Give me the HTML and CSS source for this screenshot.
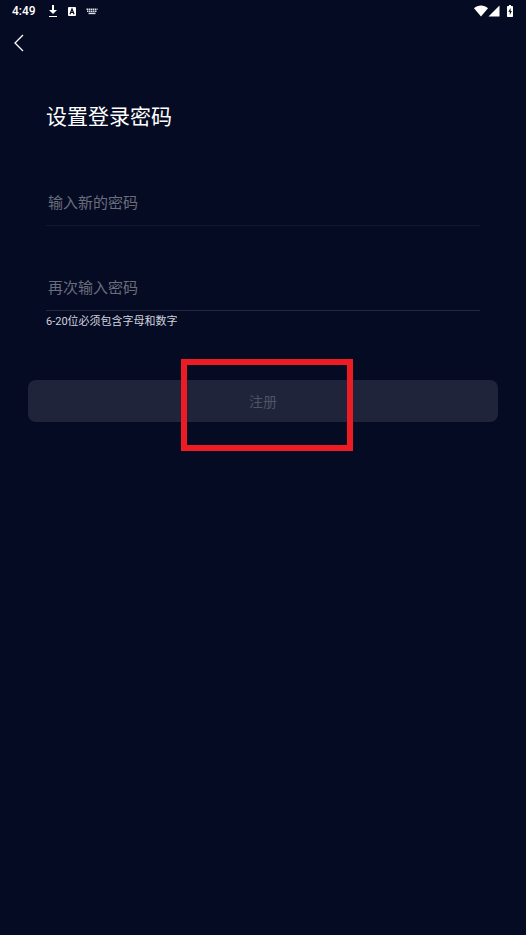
FILE: index.html
```html
<!DOCTYPE html>
<html lang="zh-CN">
<head>
<meta charset="utf-8">
<meta name="viewport" content="width=device-width, initial-scale=1">
<title>设置登录密码</title>
<link rel="stylesheet" href="styles.css">
</head>
<body>
<header class="status">
  <div class="status-left">
    <time class="clock">4:49</time>
    <svg class="download" width="10" height="14" viewBox="0 0 10 14" aria-hidden="true"><path d="M4 1h2v5h3L5 10 1 6h3zM1 12h8v1H1z" fill="#fff"/></svg>
    <svg class="badge" width="8" height="9" viewBox="0 0 8 9" aria-hidden="true"><rect width="8" height="9" rx="1" fill="#fff"/><path d="M2 7.200L4 2l2 5.200M2.800 5.500h2.400" fill="none" stroke="#070b23" stroke-width="1.200"/></svg>
    <svg class="keyboard" width="12" height="7" viewBox="0 0 12 7" aria-hidden="true"><g fill="none" stroke="#e0e2ea" stroke-width="1.500"><path d="M.5 1.300h11" stroke-dasharray="1.500 .5"/><path d="M1 3.300h10" stroke-dasharray="1.500 .5"/><path d="M2.500 5.400h7"/></g></svg>
  </div>
  <div class="status-right">
    <svg width="14" height="12" viewBox="0 0 14 12" aria-hidden="true"><path d="M0 3.200C4-.4 10-.4 14 3.200L7 11.500z" fill="#fff"/></svg>
    <svg width="12" height="12" viewBox="0 0 12 12" aria-hidden="true"><path d="M11.500.5v11H.5z" fill="#fff"/></svg>
    <svg class="battery" width="6" height="12" viewBox="0 0 6 12" aria-hidden="true"><path d="M2 0h2v1h1.200q.8 0 .8.800v9.400q0 .8-.8.800H.8q-.8 0-.8-.8V1.800Q0 1 .8 1H2z" fill="#fff"/><path d="M3.600 3L1.300 6.800h1.500V10l2.100-4H3.600z" fill="#070b23"/></svg>
  </div>
</header>
<nav class="nav">
  <button class="back" type="button" aria-label="返回">
    <svg width="10" height="18" viewBox="0 0 10 18" aria-hidden="true"><path d="M9 1L1 9l8 8" fill="none" stroke="#fff" stroke-width="1.300"/></svg>
  </button>
</nav>
<main>
  <form>
    <div class="fields">
      <h1>设置登录密码</h1>
      <input class="field field-new" type="password" placeholder="输入新的密码" aria-label="输入新的密码">
      <input class="field field-repeat" type="password" placeholder="再次输入密码" aria-label="再次输入密码" aria-describedby="hint">
      <p class="hint" id="hint">6-20位必须包含字母和数字</p>
    </div>
    <div class="action">
      <button class="submit" type="submit" disabled>注册</button>
      <span class="marker" aria-hidden="true"></span>
    </div>
  </form>
</main>
</body>
</html>
```
FILE: styles.css
```css
* {
  box-sizing: border-box;
}

body {
  margin: 0;
  min-height: 100vh;
  background: #060b24;
  color: #fff;
  font-family: Roboto, "Noto Sans CJK SC", sans-serif;
}

svg {
  display: block;
}

.status {
  display: flex;
  justify-content: space-between;
  height: 22px;
  padding: 0 13px 0 12px;
}

.status-left,
.status-right {
  display: flex;
  align-items: center;
}

.clock {
  font-size: 12px;
  font-weight: 500;
}

.download {
  margin-left: 12px;
}

.badge {
  margin-left: 10px;
}

.keyboard {
  margin-left: 10px;
}

.battery {
  margin-left: 7px;
}

.nav {
  display: flex;
  height: 42px;
}

.back {
  display: flex;
  align-items: center;
  width: 42px;
  padding: 0 0 0 14px;
  border: 0;
  background: none;
}

.fields {
  padding: 36px 46px 0;
}

h1 {
  margin: 0;
  font-size: 21px;
  font-weight: 400;
  line-height: 34px;
}

.field {
  display: block;
  width: 100%;
  height: 46px;
  padding: 0 2px;
  border: 0;
  border-bottom: 1px solid #12172e;
  border-radius: 0;
  background: none;
  color: #fff;
  font-family: inherit;
  font-size: 15px;
  outline: 0;
}

.field::placeholder {
  color: #6a6d7c;
  opacity: 1;
}

.field-new {
  margin-top: 46px;
}

.field-repeat {
  margin-top: 39px;
  border-color: #24283d;
}

.hint {
  margin: 0;
  color: #d0d2dc;
  font-size: 11px;
  line-height: 22px;
}

.action {
  position: relative;
  margin: 47px 28px 0;
}

.submit {
  display: block;
  width: 100%;
  height: 42px;
  padding: 0;
  border: 0;
  border-radius: 8px;
  background: #20243a;
  color: #505365;
  font-family: inherit;
  font-size: 14px;
}

.marker {
  position: absolute;
  top: -21px;
  left: 50%;
  width: 172px;
  height: 92px;
  margin-left: -82px;
  border: 6px solid #ed1c24;
  pointer-events: none;
}
```
